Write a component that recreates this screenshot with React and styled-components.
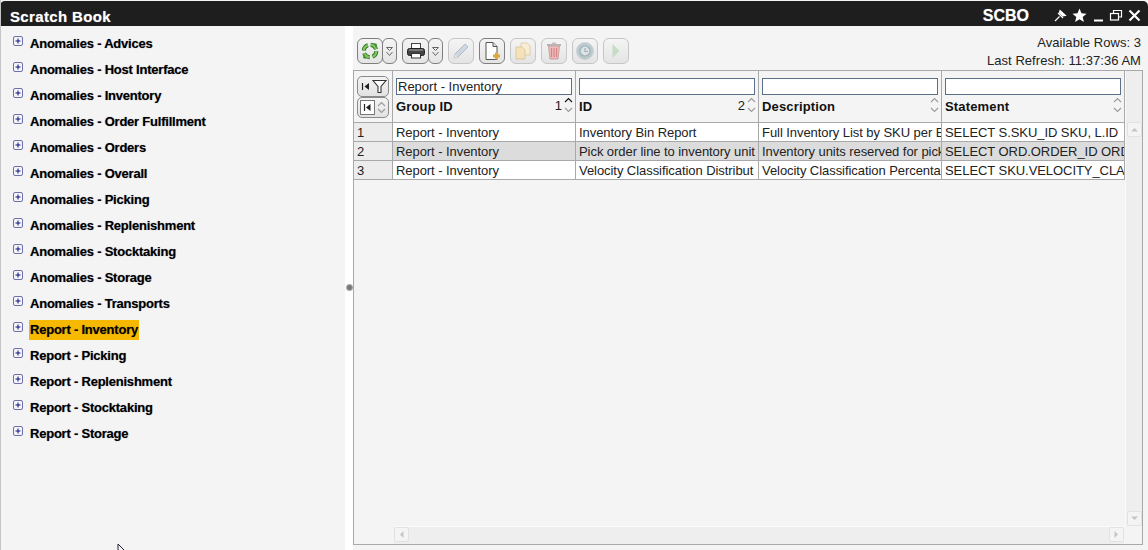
import React from "react";
import styled, { createGlobalStyle } from "styled-components";

const Global = createGlobalStyle`
  html, body { margin: 0; padding: 0; background: #fff; overflow: hidden; }
  * { box-sizing: border-box; }
  body { font-family: "Liberation Sans", Arial, sans-serif; }
`;

const Page = styled.div`
  width: 1148px; height: 550px; display: flex; flex-direction: column; background: #f4f4f4;
  border-left: 1px solid #c4c4c4; position: relative; overflow: hidden;
`;
const TitleBar = styled.header`
  height: 25px; margin-top: 1px; background: #1e1e1e; color: #fff; display: flex; align-items: center;
  border-radius: 5px 5px 0 0; padding: 5px 7px 0 10px; flex: none; margin-left: -1px;
`;
const Title = styled.div`
  font-size: 15px; font-weight: 700; flex: 1; letter-spacing: .35px; text-shadow: 0 0 1px rgba(255,255,255,.5);
`;
const Schema = styled.div`
  font-size: 16px; font-weight: 700; margin-right: 24px; text-shadow: 0 0 1px rgba(255,255,255,.5);
`;
const WinIcons = styled.div`display: flex; align-items: center; gap: 5px; margin-top: -2px;`;
const Body = styled.div`flex: 1; display: flex; min-height: 0;`;
const Tree = styled.nav`
  width: 344px; flex: none; padding: 8px 0 0 12px; display: flex; flex-direction: column;
`;
const TreeRow = styled.div`height: 26px; display: flex; align-items: flex-start; padding-top: 1px;`;
const Expander = styled.svg`width: 10px; height: 10px; margin: 1px 6px 0 0; flex: none;`;
const TreeLabel = styled.span`
  font-size: 13px; font-weight: 700; line-height: 20px; height: 20px; padding: 0 1px;
  margin-top: -1px; color: #000; background: ${p => (p.$active ? "#f7b900" : "transparent")};
  letter-spacing: -.22px; text-shadow: 0 0 1px rgba(0,0,40,.45); white-space: nowrap;
`;
const Split = styled.div`
  width: 8px; flex: none; background: #fff; position: relative;
`;
const Grip = styled.i`
  position: absolute; left: 1px; top: 258px; width: 7px; height: 7px; border-radius: 50%;
  background: radial-gradient(circle at 50% 50%, #777 0 35%, #b4b4b4 70%);
`;
const Main = styled.main`flex: 1; display: flex; flex-direction: column; min-width: 0; padding-right: 5px; padding-bottom: 5px;`;
const ToolRow = styled.div`height: 44px; flex: none; display: flex; align-items: flex-start; padding: 12px 0 0 4px; margin-right: -2px;`;
const ToolGroup = styled.div`display: flex; margin-right: 5px;`;
const ToolBtn = styled.button`
  width: ${p => p.$w || 26}px; height: 26px; padding: 0; margin: 0; display: flex; align-items: center; justify-content: center;
  background: linear-gradient(#f4f4f4, #e4e4e4); border-radius: 6px;
  border: 1px solid ${p => (p.$off ? "#c6c6c6" : "#7f7f7f")};
  & > svg { opacity: ${p => (p.$off ? 0.72 : 1)}; }
`;
const MoreBtn = styled(ToolBtn)`width: 15px; margin-left: -1px;`;
const Status = styled.div`
  margin-left: auto; margin-top: -4px; padding-right: 4px; text-align: right; font-size: 13px; line-height: 18px; color: #222; letter-spacing: .04px;
`;
const Grid = styled.section`
  flex: 1; min-height: 0; border: 1px solid #a9a9a9; display: flex; flex-direction: column; background: #f4f4f4;
`;
const GridTop = styled.div`flex: 1; min-height: 0; display: flex;`;
const Columns = styled.div`width: 771px; flex: none; overflow: hidden;`;
const HeadRow = styled.div`
  display: grid; grid-template-columns: 39px repeat(4, 183px); height: 52px;
`;
const RowHeadCell = styled.div`
  border-right: 1px solid #a9a9a9; border-bottom: 1px solid #a9a9a9; padding: 5px 0 0 3px;
  display: flex; flex-direction: column;
`;
const ColHead = styled.div`
  border-right: 1px solid #a9a9a9; border-bottom: 1px solid #a9a9a9; padding: 7px 3px 0 3px; position: relative;
`;
const FilterInput = styled.input`
  display: block; width: 176px; height: 17px; margin: 0; padding: 0 1px; border: 1px solid #5b6f88; background: #fff;
  font: 13px/15px "Liberation Sans", Arial, sans-serif; color: #222;
`;
const HeadLabel = styled.div`
  font-size: 13px; font-weight: 700; color: #111; margin-top: 4px; line-height: 15px; letter-spacing: .15px;
`;
const SortBox = styled.div`
  position: absolute; right: 2px; top: 26px; display: flex; align-items: flex-start; font-size: 13px; line-height: 15px; color: #222;
`;
const SortNum = styled.span`margin: 1px 2px 0 0;`;
const SortStack = styled.div`display: flex; flex-direction: column; gap: 4px;`;
const MiniBtn = styled.button`
  width: 32px; height: 21px; padding: 0; display: flex; align-items: center; justify-content: center; gap: 2px;
  background: linear-gradient(#f4f4f4, #e2e2e2); border: 1px solid #8a8a8a; border-radius: 5px;
`;
const MiniStack = styled.div`display: flex; flex-direction: column; gap: 1px;`;
const DataRow = styled.div`
  display: grid; grid-template-columns: 39px repeat(4, 183px); grid-template-rows: 19px; height: 19px;
  background: ${p => (p.$alt ? "#dcdcdc" : "#fff")};
`;
const IndexCell = styled.div`
  border-right: 1px solid #a9a9a9; border-bottom: 1px solid #a9a9a9; background: #ececec; font-size: 13px; line-height: 18px; padding: 1px 0 0 3px; color: #222; overflow: hidden;
`;
const Cell = styled.div`
  border-right: 1px solid #a9a9a9; border-bottom: 1px solid #a9a9a9; font-size: 13px; line-height: 18px; padding: 1px 0 0 3px;
  white-space: nowrap; overflow: hidden; color: #222; letter-spacing: -.06px;
`;
const VScroll = styled.div`
  width: 17px; padding: 51px 1px 0 1px; display: flex; flex-direction: column; justify-content: space-between; flex: none; background: #eee; border-left: 1px solid #fafafa;
`;
const ScrollBtn = styled.div`
  width: 15px; height: 15px; background: #f4f4f4; border: 1px solid #e2e2e2; border-radius: 2px; display: flex; align-items: center; justify-content: center; flex: none;
`;
const HScroll = styled.div`
  height: 18px; margin-left: 40px; margin-right: 18px; border-top: 1px solid #fafafa; background: #eee; display: flex; justify-content: space-between; flex: none;
`;

const Plus = () => (
  <Expander viewBox="0 0 10 10">
    <rect x=".5" y=".5" width="9" height="9" rx="1.5" fill="#f4f4fb" stroke="#6f6fa8" />
    <path d="M2.500 5h5M5 2.500v5" stroke="#10107a" strokeWidth="1" />
  </Expander>
);

const Caret = ({ up, color = "#999" }) => (
  <svg width="9" height="6" viewBox="0 0 9 6" style={{ display: "block" }}>
    <path d={up ? "M1 5l3.500-3.500L8 5" : "M1 1l3.500 3.500L8 1"} fill="none" stroke={color} strokeWidth="1.100" />
  </svg>
);

const DoubleDown = () => (
  <svg width="9" height="11" viewBox="0 0 9 11">
    <path d="M1.500 1.500h6L4.500 4.500zM1.500 6l3 3.500 3-3.500" fill="none" stroke="#666" strokeWidth="1" />
  </svg>
);

const Refresh = () => (
  <svg width="20" height="20" viewBox="0 0 20 20">
    <circle cx="10" cy="10" r="6.300" fill="none" stroke="#2f6f2a" strokeWidth="4" strokeDasharray="7 2.900" />
    <circle cx="10" cy="10" r="6.300" fill="none" stroke="#7cc35a" strokeWidth="2.400" strokeDasharray="7 2.900" />
    <path d="M14 2l3 1-1 4zM6 18l-3-1 1-4z" fill="#3d8f2d" />
  </svg>
);
const Printer = () => (
  <svg width="20" height="18" viewBox="0 0 20 18">
    <rect x="5.500" y="1.500" width="9" height="5" fill="#fff" stroke="#444" />
    <rect x="1.500" y="6.500" width="17" height="7" rx="2" fill="#444" stroke="#222" />
    <rect x="5.500" y="11.500" width="9" height="4.500" fill="#fff" stroke="#333" />
    <path d="M3 8h14" stroke="#aaa" />
  </svg>
);
const Pencil = () => (
  <svg width="20" height="20" viewBox="0 0 20 20">
    <path d="M3 17l1-4L14 3l3 3L7 16z" fill="#c3d0e0" stroke="#9aa8ba" strokeWidth="1" />
    <path d="M3 17l1-4 3 3z" fill="#e8e0d0" />
  </svg>
);
const NewDoc = () => (
  <svg width="20" height="21" viewBox="0 0 20 21">
    <path d="M4 1.500h7l4 4v13H4z" fill="#fff" stroke="#555" />
    <path d="M11 1.500v4h4" fill="#ddd" stroke="#555" />
    <path d="M14.500 11.500v7M11 15h7" stroke="#e0a83c" strokeWidth="3" />
  </svg>
);
const Copy = () => (
  <svg width="20" height="20" viewBox="0 0 20 20">
    <path d="M8 2h6l3 3v9H8z" fill="#fbeecb" stroke="#dcc48e" />
    <path d="M3 6h6l3 3v9H3z" fill="#f8e0a8" stroke="#d8bd85" />
  </svg>
);
const Trash = () => (
  <svg width="20" height="20" viewBox="0 0 20 20">
    <path d="M4.500 5h11l-1.500 13H6z" fill="#f0a8a8" stroke="#b88" />
    <path d="M7.500 7v9M10 7v9M12.500 7v9" stroke="#d05a5a" strokeWidth="1.100" />
    <path d="M3 4h14" stroke="#a89a9a" strokeWidth="2" />
    <path d="M8 2.500h4" stroke="#b9a8a8" strokeWidth="2" />
  </svg>
);
const History = () => (
  <svg width="20" height="20" viewBox="0 0 20 20">
    <circle cx="10" cy="10" r="8.500" fill="#a8bcc2" stroke="#c0cccf" />
    <circle cx="10" cy="10" r="5" fill="#d8e0e2" stroke="#7f9ca4" strokeWidth="1.200" />
    <path d="M10 7v3.500h3" fill="none" stroke="#7f9ca4" strokeWidth="1.200" />
  </svg>
);
const Play = () => (
  <svg width="20" height="20" viewBox="0 0 20 20">
    <path d="M6.500 3l7 7-7 7z" fill="#b7d8b4" />
  </svg>
);
const Pin = () => (
  <svg width="15" height="15" viewBox="0 0 15 15" style={{ marginRight: -1 }}>
    <path d="M2 13l4.500-4.500M5 5l5 5M7 2.500l5.500 5-2.500.5-3.500-3.500z" fill="#fff" stroke="#fff" strokeWidth="1.100" />
  </svg>
);
const Star = () => (
  <svg width="15" height="15" viewBox="0 0 15 15" style={{ marginRight: 1 }}>
    <path d="M7.500.5l2 4.800 5 .4-3.800 3.300 1.200 5-4.400-2.700L3.100 14l1.200-5L.5 5.700l5-.4z" fill="#fff" />
  </svg>
);
const Minimize = () => (
  <svg width="11" height="13" viewBox="0 0 11 13"><path d="M1 11.500h9" stroke="#fff" strokeWidth="2" /></svg>
);
const Restore = () => (
  <svg width="14" height="13" viewBox="0 0 14 13">
    <path d="M4.500 4V1.500h8v6.500H10" fill="none" stroke="#fff" strokeWidth="1.200" />
    <rect x="1.500" y="4.500" width="8" height="6.500" fill="none" stroke="#fff" strokeWidth="1.200" />
  </svg>
);
const Close = () => (
  <svg width="13" height="13" viewBox="0 0 13 13"><path d="M1.500 1.500l10 10M11.500 1.500l-10 10" stroke="#fff" strokeWidth="2.200" /></svg>
);
const FilterIcon = () => (
  <svg width="27" height="15" viewBox="0 0 27 15">
    <path d="M2.500 4v7" stroke="#222" strokeWidth="1.200" />
    <path d="M9 4L4.500 7.500 9 11z" fill="#222" />
    <path d="M13 1.500h13l-5 6v6h-3v-6z" fill="#fff" stroke="#333" strokeWidth="1.100" />
  </svg>
);
const FirstIcon = () => (
  <svg width="15" height="15" viewBox="0 0 15 15">
    <rect x=".5" y=".5" width="14" height="14" fill="#fff" stroke="#777" />
    <path d="M4.500 4v7" stroke="#222" strokeWidth="1.200" />
    <path d="M10.500 4L6 7.500l4.500 3.500z" fill="#222" />
  </svg>
);
const Arrow = ({ d }) => (
  <svg width="9" height="9" viewBox="0 0 9 9"><path d={d} fill="#c4c4c4" /></svg>
);
const Cursor = styled.svg`position: absolute; left: 116px; top: 544px;`;

const groups = [
  "Anomalies - Advices", "Anomalies - Host Interface", "Anomalies - Inventory", "Anomalies - Order Fulfillment",
  "Anomalies - Orders", "Anomalies - Overall", "Anomalies - Picking", "Anomalies - Replenishment",
  "Anomalies - Stocktaking", "Anomalies - Storage", "Anomalies - Transports", "Report - Inventory",
  "Report - Picking", "Report - Replenishment", "Report - Stocktaking", "Report - Storage",
];
const cols = [
  { label: "Group ID", value: "Report - Inventory", num: "1", active: true },
  { label: "ID", value: "", num: "2" },
  { label: "Description", value: "" },
  { label: "Statement", value: "" },
];
const rows = [
  ["Report - Inventory", "Inventory Bin Report", "Full Inventory List by SKU per B", "SELECT S.SKU_ID SKU, L.ID"],
  ["Report - Inventory", "Pick order line to inventory unit", "Inventory units reserved for pick", "SELECT ORD.ORDER_ID ORD"],
  ["Report - Inventory", "Velocity Classification Distribut", "Velocity Classification Percenta", "SELECT SKU.VELOCITY_CLA"],
];

export default function App() {
  return (
    <Page>
      <Global />
      <TitleBar>
        <Title>Scratch Book</Title>
        <Schema>SCBO</Schema>
        <WinIcons><Pin /><Star /><Minimize /><Restore /><Close /></WinIcons>
      </TitleBar>
      <Body>
        <Tree>
          {groups.map(g => (
            <TreeRow key={g}>
              <Plus />
              <TreeLabel $active={g === "Report - Inventory"}>{g}</TreeLabel>
            </TreeRow>
          ))}
        </Tree>
        <Split><Grip /></Split>
        <Main>
          <ToolRow>
            <ToolGroup>
              <ToolBtn><Refresh /></ToolBtn>
              <MoreBtn><DoubleDown /></MoreBtn>
            </ToolGroup>
            <ToolGroup>
              <ToolBtn $w={27}><Printer /></ToolBtn>
              <MoreBtn><DoubleDown /></MoreBtn>
            </ToolGroup>
            <ToolGroup><ToolBtn $off><Pencil /></ToolBtn></ToolGroup>
            <ToolGroup><ToolBtn><NewDoc /></ToolBtn></ToolGroup>
            <ToolGroup><ToolBtn $off><Copy /></ToolBtn></ToolGroup>
            <ToolGroup><ToolBtn $off><Trash /></ToolBtn></ToolGroup>
            <ToolGroup><ToolBtn $off><History /></ToolBtn></ToolGroup>
            <ToolGroup><ToolBtn $off><Play /></ToolBtn></ToolGroup>
            <Status>Available Rows: 3<br />Last Refresh: 11:37:36 AM</Status>
          </ToolRow>
          <Grid>
            <GridTop>
              <Columns>
                <HeadRow>
                  <RowHeadCell>
                    <MiniBtn><FilterIcon /></MiniBtn>
                    <MiniBtn><FirstIcon /><MiniStack><Caret up /><Caret /></MiniStack></MiniBtn>
                  </RowHeadCell>
                  {cols.map(c => (
                    <ColHead key={c.label}>
                      <FilterInput readOnly value={c.value} />
                      <HeadLabel>{c.label}</HeadLabel>
                      <SortBox>
                        {c.num && <SortNum>{c.num}</SortNum>}
                        <SortStack>
                          <Caret up color={c.active ? "#111" : "#999"} />
                          <Caret />
                        </SortStack>
                      </SortBox>
                    </ColHead>
                  ))}
                </HeadRow>
                {rows.map((r, i) => (
                  <DataRow key={i} $alt={i === 1}>
                    <IndexCell>{i + 1}</IndexCell>
                    {r.map((t, j) => <Cell key={j}>{t}</Cell>)}
                  </DataRow>
                ))}
              </Columns>
              <VScroll>
                <ScrollBtn><Arrow d="M1 6.500L4.500 3 8 6.500z" /></ScrollBtn>
                <ScrollBtn><Arrow d="M1 2.500L4.500 6 8 2.500z" /></ScrollBtn>
              </VScroll>
            </GridTop>
            <HScroll>
              <ScrollBtn><Arrow d="M6.500 1L3 4.500 6.500 8z" /></ScrollBtn>
              <ScrollBtn><Arrow d="M2.500 1L6 4.500 2.500 8z" /></ScrollBtn>
            </HScroll>
          </Grid>
        </Main>
      </Body>
      <Cursor width="8" height="6" viewBox="0 0 8 6"><path d="M1 0v6M1 0l6 6" stroke="#223" fill="none" /></Cursor>
    </Page>
  );
}
